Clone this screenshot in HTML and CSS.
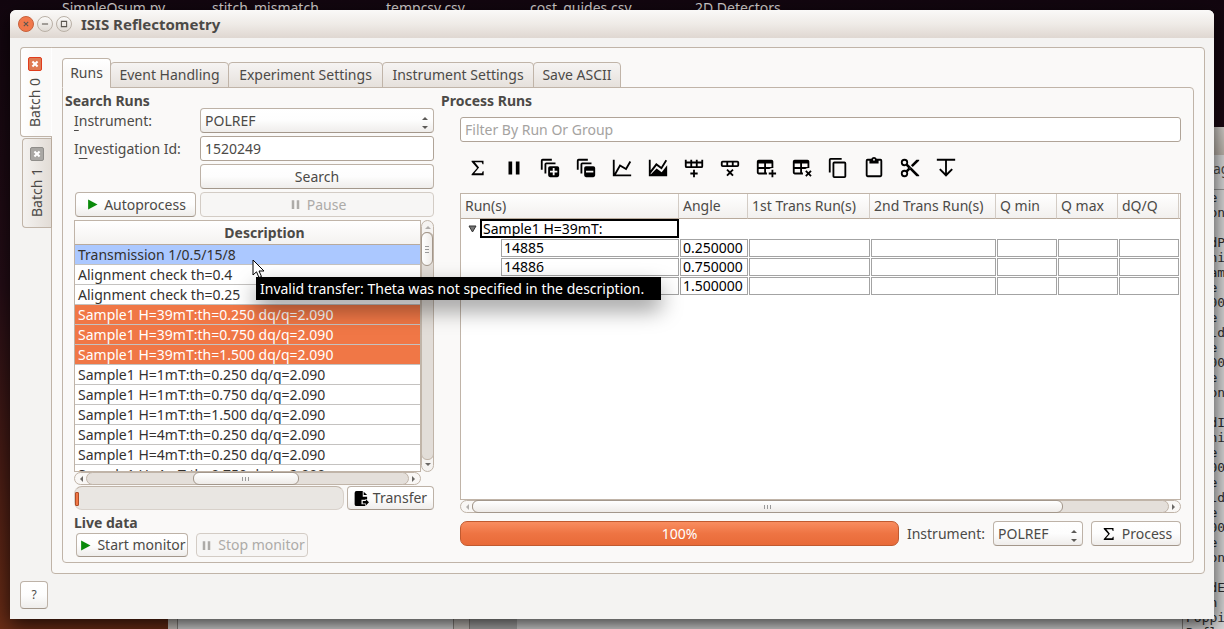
FILE: index.html
```
<!DOCTYPE html>
<html lang="en">
<head>
<meta charset="utf-8">
<title>ISIS Reflectometry</title>
<link rel="stylesheet" href="styles.css">
</head>
<body>
<svg class="defs" aria-hidden="true">
  <symbol id="sigma" viewBox="0 0 24 24"><path d="M5,4H18V8H17L16,5.700H8.500L13.200,11.500L8,17.700H16.200L17.200,15.500H18.200V20H5V18.700L11,12L5,5.200Z"/></symbol>
  <symbol id="pause" viewBox="0 0 24 24"><path d="M14,19H18V5H14M6,19H10V5H6V19Z"/></symbol>
  <symbol id="play" viewBox="0 0 24 24"><path d="M5,4V20L20,12Z"/></symbol>
</svg>
<div class="desktop">
  <div class="desktop-icons"><span>SimpleQsum.py</span><span>stitch_mismatch</span><span>tempcsv.csv</span><span>cost_guides.csv</span><span>2D Detectors</span></div>
  <div class="back-window back-bottom"><i></i><i></i><i></i></div>
  <div class="back-window back-right">
    <div class="back-title"></div>
    <div class="back-tab">ag</div>
<pre class="back-log">
   e
   on

   dP
   ni
   am
   e
   00
   e
   ld
   e
   00
   e
   on

   dI
   ni
   e
   00
   e
   ld
   e
   00
   e
   on

   dE
   n
Poppi
Refl</pre>
  </div>

  <main class="window">
    <header class="titlebar">
      <button class="wm wm-close" aria-label="Close"><svg viewBox="0 0 16 16"><path d="M5.500 5.500l5 5M10.500 5.500l-5 5"/></svg></button>
      <button class="wm" aria-label="Minimize"><svg viewBox="0 0 16 16"><path d="M4.500 8h7"/></svg></button>
      <button class="wm" aria-label="Maximize"><svg viewBox="0 0 16 16"><path d="M5 5h6v6H5z"/></svg></button>
      <h1>ISIS Reflectometry</h1>
    </header>
    <div class="content">
      <div class="batches">
        <div class="batch-tabs">
          <div class="batch-tab active"><button class="tab-close" aria-label="Close Batch 0"><svg viewBox="0 0 14 14"><path d="M4 4l6 6M10 4l-6 6"/></svg></button><button class="batch-label">Batch 0</button></div>
          <div class="batch-tab"><button class="tab-close" aria-label="Close Batch 1"><svg viewBox="0 0 14 14"><path d="M4 4l6 6M10 4l-6 6"/></svg></button><button class="batch-label">Batch 1</button></div>
        </div>
        <section class="batch-panel">
          <nav class="tabs">
            <button class="tab active">Runs</button><button class="tab">Event Handling</button><button class="tab">Experiment Settings</button><button class="tab">Instrument Settings</button><button class="tab">Save ASCII</button>
          </nav>
          <div class="tab-panel">
            <section class="search">
              <h2>Search Runs</h2>
              <div class="search-body">
                <div class="form">
                  <label for="inst"><u>I</u>nstrument:</label>
                  <span class="combo"><select id="inst"><option>POLREF</option></select></span>
                  <label for="inv">I<u>n</u>vestigation Id:</label>
                  <input id="inv" class="field" type="text" value="1520249">
                  <button class="btn search-btn">Search</button>
                  <button class="btn auto"><svg class="ico green"><use href="#play"/></svg>Autoprocess</button>
                  <button class="btn" disabled><svg class="ico"><use href="#pause"/></svg>Pause</button>
                </div>
                <div class="list-area">
                  <div class="list">
                    <table>
                      <thead><tr><th>Description</th></tr></thead>
                      <tbody>
                        <tr class="invalid"><td>Transmission 1/0.5/15/8</td></tr>
                        <tr><td>Alignment check th=0.4</td></tr>
                        <tr><td>Alignment check th=0.25</td></tr>
                        <tr class="selected"><td>Sample1 H=39mT:th=0.250 dq/q=2.090</td></tr>
                        <tr class="selected"><td>Sample1 H=39mT:th=0.750 dq/q=2.090</td></tr>
                        <tr class="selected"><td>Sample1 H=39mT:th=1.500 dq/q=2.090</td></tr>
                        <tr><td>Sample1 H=1mT:th=0.250 dq/q=2.090</td></tr>
                        <tr><td>Sample1 H=1mT:th=0.750 dq/q=2.090</td></tr>
                        <tr><td>Sample1 H=1mT:th=1.500 dq/q=2.090</td></tr>
                        <tr><td>Sample1 H=4mT:th=0.250 dq/q=2.090</td></tr>
                        <tr><td>Sample1 H=4mT:th=0.250 dq/q=2.090</td></tr>
                        <tr><td>Sample1 H=4mT:th=0.750 dq/q=2.090</td></tr>
                      </tbody>
                    </table>
                  </div>
                  <div class="vbar"><b class="arrow up dim"></b><div class="vtrack"><div class="vthumb"><i></i><i></i><i></i></div></div><b class="arrow down"></b></div>
                  <div class="hbar"><b class="arrow left"></b><div class="htrack"><div class="hthumb hthumb-list"><i></i><i></i><i></i></div></div><b class="arrow right"></b></div>
                </div>
                <div class="transfer-row">
                  <div class="progress" role="progressbar" aria-label="Search progress"><span></span></div>
                  <button class="btn transfer"><svg class="ico black" viewBox="0 0 24 24"><path d="M4 0h10v9h7v4h-3v1h-6v7h6v3H4a3 3 0 0 1-3-3V3a3 3 0 0 1 3-3M15.500 1l5.500 5.500h-5.500zM14 16h5v-3l5 5l-5 5v-3h-5z"/></svg>Transfer</button>
                </div>
                <h2>Live data</h2>
                <div class="live-row">
                  <button class="btn"><svg class="ico green"><use href="#play"/></svg>Start monitor</button>
                  <button class="btn" disabled><svg class="ico"><use href="#pause"/></svg>Stop monitor</button>
                </div>
              </div>
            </section>

            <section class="process">
              <h2>Process Runs</h2>
              <div class="process-body">
                <input class="field filter" type="text" placeholder="Filter By Run Or Group" aria-label="Filter By Run Or Group">
                <div class="toolbar">
                  <button aria-label="Process"><svg><use href="#sigma"/></svg></button>
                  <button aria-label="Pause"><svg><use href="#pause"/></svg></button>
                  <button aria-label="Expand all"><svg viewBox="0 0 24 24"><path d="M18,8H8V18H6V8A2,2 0 0,1 8,6H18V8M14,2H4A2,2 0 0,0 2,4V14H4V4H14V2M22,12V20A2,2 0 0,1 20,22H12A2,2 0 0,1 10,20V12A2,2 0 0,1 12,10H20A2,2 0 0,1 22,12M20,15H17V12H15V15H12V17H15V20H17V17H20V15Z"/></svg></button>
                  <button aria-label="Collapse all"><svg viewBox="0 0 24 24"><path d="M18,8H8V18H6V8A2,2 0 0,1 8,6H18V8M14,2H4A2,2 0 0,0 2,4V14H4V4H14V2M22,12V20A2,2 0 0,1 20,22H12A2,2 0 0,1 10,20V12A2,2 0 0,1 12,10H20A2,2 0 0,1 22,12M20,15H12V17H20V15Z"/></svg></button>
                  <button aria-label="Plot"><svg viewBox="0 0 24 24"><path d="M16,11.78L20.24,4.45L21.97,5.45L16.74,14.5L10.23,10.75L5.46,19H22V21H2V3H4V17.54L9.5,8L16,11.78Z"/></svg></button>
                  <button aria-label="Stitched plot"><svg viewBox="0 0 24 24"><path d="M2 3h2v11.500L10 6.500l5.500 4L20.200 3l1.700 1.200L16 13.500l-5.500-4L4 18v1L10.500 12.500l5.500 4L22 9v12H2z"/></svg></button>
                  <button aria-label="Insert row"><svg viewBox="0 0 24 24"><path d="M22,10A2,2 0 0,1 20,12H4A2,2 0 0,1 2,10V3H4V5H8V3H10V5H14V3H16V5H20V3H22V10M4,10H8V7H4V10M10,10H14V7H10V10M20,10V7H16V10H20M11,14H13V17H16V19H13V22H11V19H8V17H11V14Z"/></svg></button>
                  <button aria-label="Delete row"><svg viewBox="0 0 24 24"><path d="M9.41,13L12,15.59L14.59,13L16,14.41L13.41,17L16,19.59L14.59,21L12,18.41L9.41,21L8,19.59L10.59,17L8,14.41L9.41,13M22,9A2,2 0 0,1 20,11H4A2,2 0 0,1 2,9V6A2,2 0 0,1 4,4H20A2,2 0 0,1 22,6V9M4,9H8V6H4V9M10,9H14V6H10V9M16,9H20V6H16V9Z"/></svg></button>
                  <button aria-label="Insert group"><svg viewBox="0 0 24 24"><path d="M18,14H20V17H23V19H20V22H18V19H15V17H18V14M4,3H18A2,2 0 0,1 20,5V12.08C18.45,11.82 16.92,12.18 15.68,13H12V17H13.08C12.97,17.68 12.97,18.35 13.08,19H4A2,2 0 0,1 2,17V5A2,2 0 0,1 4,3M4,7V11H10V7H4M12,7V11H18V7H12M4,13V17H10V13H4Z"/></svg></button>
                  <button aria-label="Delete group"><svg viewBox="0 0 24 24"><path d="M15.46,15.88L16.88,14.46L19,16.59L21.12,14.46L22.54,15.88L20.41,18L22.54,20.12L21.12,21.54L19,19.41L16.88,21.54L15.46,20.12L17.59,18L15.46,15.88M4,3H18A2,2 0 0,1 20,5V12.08C18.45,11.82 16.92,12.18 15.68,13H12V17H13.08C12.97,17.68 12.97,18.35 13.08,19H4A2,2 0 0,1 2,17V5A2,2 0 0,1 4,3M4,7V11H10V7H4M12,7V11H18V7H12M4,13V17H10V13H4Z"/></svg></button>
                  <button aria-label="Copy"><svg viewBox="0 0 24 24"><path d="M19,21H8V7H19M19,5H8A2,2 0 0,0 6,7V21A2,2 0 0,0 8,23H19A2,2 0 0,0 21,21V7A2,2 0 0,0 19,5M16,1H4A2,2 0 0,0 2,3V17H4V3H16V1Z"/></svg></button>
                  <button aria-label="Paste"><svg viewBox="0 0 24 24"><path d="M19,20H5V4H7V7H17V4H19M12,2A1,1 0 0,1 13,3A1,1 0 0,1 12,4A1,1 0 0,1 11,3A1,1 0 0,1 12,2M19,2H14.82C14.4,0.84 13.3,0 12,0C10.7,0 9.6,0.84 9.18,2H5A2,2 0 0,0 3,4V20A2,2 0 0,0 5,22H19A2,2 0 0,0 21,20V4A2,2 0 0,0 19,2Z"/></svg></button>
                  <button aria-label="Cut"><svg viewBox="0 0 24 24"><path d="M19,3L13,9L15,11L22,4V3M12,12.5A0.5,0.5 0 0,1 11.5,12A0.5,0.5 0 0,1 12,11.5A0.5,0.5 0 0,1 12.5,12A0.5,0.5 0 0,1 12,12.5M6,20A2,2 0 0,1 4,18C4,16.89 4.9,16 6,16A2,2 0 0,1 8,18C8,19.11 7.1,20 6,20M6,8A2,2 0 0,1 4,6C4,4.89 4.9,4 6,4A2,2 0 0,1 8,6C8,7.11 7.1,8 6,8M9.64,7.64C9.87,7.14 10,6.59 10,6A4,4 0 0,0 6,2A4,4 0 0,0 2,6A4,4 0 0,0 6,10C6.59,10 7.14,9.87 7.64,9.64L10,12L7.64,14.36C7.14,14.13 6.59,14 6,14A4,4 0 0,0 2,18A4,4 0 0,0 6,22A4,4 0 0,0 10,18C10,17.41 9.87,16.86 9.64,16.36L12,14L19,21H22V20L9.64,7.64Z"/></svg></button>
                  <button aria-label="Fill down"><svg viewBox="0 0 24 24"><path d="M2 2H22V4H13V17.500L18 12.500L19.500 14L12 21.500L4.500 14L6 12.500L11 17.500V4H2Z"/></svg></button>
                </div>
                <div class="runs">
                  <table>
                    <colgroup><col class="c-run"><col class="c-angle"><col class="c-t1"><col class="c-t2"><col class="c-q"><col class="c-q"><col class="c-q"><col></colgroup>
                    <thead><tr><th>Run(s)</th><th>Angle</th><th>1st Trans Run(s)</th><th>2nd Trans Run(s)</th><th>Q min</th><th>Q max</th><th>dQ/Q</th><th></th></tr></thead>
                    <tbody>
                      <tr class="group"><td colspan="8"><div class="group-row"><svg viewBox="0 0 9 8"><path d="M1 1h7L4.500 7z"/></svg><div class="group-cell">Sample1 H=39mT:</div></div></td></tr>
                      <tr><td class="run"><div class="cell">14885</div></td><td><div class="cell">0.250000</div></td><td><div class="cell"></div></td><td><div class="cell"></div></td><td><div class="cell"></div></td><td><div class="cell"></div></td><td><div class="cell"></div></td><td></td></tr>
                      <tr><td class="run"><div class="cell">14886</div></td><td><div class="cell">0.750000</div></td><td><div class="cell"></div></td><td><div class="cell"></div></td><td><div class="cell"></div></td><td><div class="cell"></div></td><td><div class="cell"></div></td><td></td></tr>
                      <tr><td class="run"><div class="cell"></div></td><td><div class="cell">1.500000</div></td><td><div class="cell"></div></td><td><div class="cell"></div></td><td><div class="cell"></div></td><td><div class="cell"></div></td><td><div class="cell"></div></td><td></td></tr>
                    </tbody>
                  </table>
                </div>
                <div class="hbar"><b class="arrow left dim"></b><div class="htrack"><div class="hthumb hthumb-runs"><i></i><i></i><i></i></div></div><b class="arrow right"></b></div>
                <div class="process-row">
                  <div class="done" role="progressbar" aria-label="Processing" aria-valuenow="100">100%</div>
                  <label for="inst2">Instrument:</label>
                  <span class="combo combo-small"><select id="inst2"><option>POLREF</option></select></span>
                  <button class="btn process-btn"><svg class="ico big black"><use href="#sigma"/></svg>Process</button>
                </div>
              </div>
            </section>
          </div>
        </section>
      </div>
      <footer><button class="btn help">?</button></footer>
    </div>
  </main>
  <div class="tooltip" role="tooltip">Invalid transfer: Theta was not specified in the description.</div>
  <svg class="pointer" viewBox="0 0 13 20" aria-hidden="true"><path d="M1 1v15l3.500-3.200L7 18.500l2.500-1L7 12h5z"/></svg>
</div>
</body>
</html>
```
FILE: styles.css
```
* { box-sizing: border-box; }
body { margin: 0; font: 14px/20px "Noto Sans", "Open Sans", sans-serif; color: #4c4a47; }
button, input, select { font: inherit; color: inherit; margin: 0; }
button { padding: 0; border: 0; background: none; }
h1, h2 { margin: 0; font-size: 14px; }
h2 { line-height: 16px; }
.defs { position: absolute; width: 0; height: 0; }

.desktop {
  position: relative; display: flex; height: 100vh; min-height: 500px; padding: 10px; overflow: hidden;
  background: linear-gradient(#12060f, #240d16 45%, #4a1d15 75%, #6b2d16);
}
.desktop-icons { position: absolute; left: 62px; top: -2px; display: grid; grid-template-columns: 150px 174px 144px 165px auto; color: #d5d0d0; white-space: nowrap; }
.back-window { position: absolute; background: #dadada; }
.back-bottom { left: 168px; right: 0; bottom: 0; height: 60px; display: flex; }
.back-bottom i { border: solid #8d8782; border-width: 0 1px; background: #d0cbc6; }
.back-bottom i:nth-child(1) { width: 10px; border-left: 0; }
.back-bottom i:nth-child(2) { width: 17px; margin-left: 275px; }
.back-bottom i:nth-child(3) { width: 47px; border: 0; background: #b0b0b0; }
.back-right { left: 1182px; right: 0; top: 127px; bottom: 0; overflow: hidden; border-left: 1px solid #8d8782; }
.back-title { height: 28px; background: linear-gradient(#d5d1cc, #bdb4ab); }
.back-tab { height: 35px; padding: 4px 0 0 30px; border-bottom: 1px solid #999; }
.back-log { margin: 0; padding-left: 3px; font: 13px/15px "DejaVu Sans Mono", monospace; color: #2d2d2d; }

.window {
  position: relative; flex: 1; min-width: 0; display: flex; flex-direction: column;
  background: #f4f3f2; border-radius: 6px 6px 0 0; box-shadow: 0 6px 20px rgba(0,0,0,.75);
}
.titlebar { display: flex; align-items: center; gap: 3px; height: 28px; padding: 0 8px; border-radius: 6px 6px 0 0; background: linear-gradient(#faf9f8, #efebe7 50%, #dfd7d1); }
.titlebar h1 { margin-left: 6px; font-size: 15px; }
.wm { width: 16px; height: 16px; border: 1px solid #b9b0a6; border-radius: 50%; background: linear-gradient(#fbfaf9, #dfdad4); }
.wm svg { display: block; width: 14px; height: 14px; fill: none; stroke: #5a5650; stroke-width: 1.2; }
.wm-close { background: #f1784b; border-color: #c8613c; }
.content { flex: 1; min-height: 0; display: flex; flex-direction: column; gap: 7px; padding: 9px 9px 10px 10px; }

.batches { flex: 1; min-height: 0; display: flex; }
.batch-tabs { position: relative; z-index: 1; width: 32px; margin-right: -1px; display: flex; flex-direction: column; align-items: flex-end; gap: 1px; }
.batch-tab { display: flex; flex-direction: column; align-items: center; gap: 7px; width: 30px; height: 90px; padding-top: 8px; border: 1px solid #c0b4a8; border-right-color: #b8aa9c; border-radius: 4px 0 0 4px; background: linear-gradient(90deg, #f4f2f0, #e2dcd6); }
.batch-tab.active { width: 32px; padding-top: 9px; border-right-color: transparent; background: linear-gradient(90deg, #fff, #faf9f8 50%); padding-right: 2px; }
.batch-label { writing-mode: vertical-rl; transform: rotate(180deg); }
.tab-close { width: 14px; height: 14px; background: #a9a7a4; border: 1px solid #8f8d8a; border-radius: 2px; }
.active .tab-close { background: #df7a52; border-color: #e03c1c; }
.tab-close svg { display: block; width: 12px; height: 12px; stroke: #fff; stroke-width: 2.4; }
.batch-panel { flex: 1; min-width: 0; display: flex; flex-direction: column; padding: 10px; border: 1px solid #c0b4a8; border-radius: 0 4px 4px 4px; background: #faf9f8; }

.tabs { position: relative; display: flex; align-items: flex-end; height: 30px; margin-bottom: -1px; }
.tab { height: 26px; margin-left: -1px; border: 1px solid #c0b4a8; border-radius: 4px 4px 0 0; background: linear-gradient(#f6f4f3, #e6e1dc); white-space: nowrap; }
.tab.active { width: 49px; height: 30px; margin: 0; border-bottom-color: #faf9f8; background: linear-gradient(#fff, #faf9f8 50%); }
.tab:nth-child(2) { width: 119px; }
.tab:nth-child(3) { width: 155px; }
.tab:nth-child(4) { width: 152px; }
.tab:nth-child(5) { width: 88px; }
.tab-panel { flex: 1; min-height: 0; display: flex; gap: 7px; padding: 5px 12px 0 2px; border: 1px solid #c0b4a8; border-radius: 0 4px 4px 4px; }

.search { flex: 0 0 369px; display: flex; flex-direction: column; padding-bottom: 5px; }
.search-body { flex: 1; min-height: 0; display: flex; flex-direction: column; margin-top: -1px; padding-left: 9px; }
.form { display: grid; grid-template-columns: 122px 1fr; grid-auto-rows: 25px; gap: 3px 4px; align-items: stretch; margin-bottom: 3px; }
.form label { line-height: 25px; }
.form u { text-underline-offset: 4px; }
.search-btn { grid-column: 2; }
.auto { margin-left: 1px; }
.btn {
  display: flex; align-items: center; justify-content: center; gap: 4px; white-space: nowrap;
  border: 1px solid #bdb2a7; border-bottom-color: #a3978b; border-radius: 4px; background: linear-gradient(#fff, #fdfdfd 50%, #efedeb);
}
.btn:disabled { color: #adaba8; border-color: #d3ccc5; background: #f7f6f5; }
.ico { width: 15px; height: 15px; fill: currentColor; }
.big { width: 18px; height: 18px; }
.green { fill: #0a8a0a; }
.black { fill: #000; }
.field { width: 100%; height: 25px; padding: 0 4px; border: 1px solid #b0a498; border-radius: 3px; background: #fff; }
.field::placeholder { color: #a5a3a1; opacity: 1; }
.combo { position: relative; display: block; }
.combo select { width: 100%; height: 25px; padding: 0 4px; appearance: none; border: 1px solid #bdb2a7; border-bottom-color: #a3978b; border-radius: 4px; background: linear-gradient(#fff, #fdfdfd 50%, #efedeb); }
.combo::before, .combo::after { content: ""; position: absolute; right: 6px; border: 3px solid transparent; }
.combo::before { top: 9px; border-top: 0; border-bottom-color: #5c5a57; }
.combo::after { bottom: 4px; border-bottom: 0; border-top-color: #5c5a57; }

.list-area { flex: 1; min-height: 0; display: grid; grid-template: minmax(0, 1fr) 13px / 1fr 13px; }
.list { overflow: hidden; border: 1px solid #c0b4a8; background: #fff; }
table { width: 100%; border-collapse: separate; border-spacing: 0; table-layout: fixed; }
td, th { padding: 0; white-space: nowrap; }
.list th { height: 24px; padding-left: 34px; border-bottom: 1px solid #b8aa9c; background: linear-gradient(#fff, #f4f2f0); }
.list td { height: 20px; padding-left: 3px; line-height: 19px; border-bottom: 1px solid #c4c2c0; color: #33312f; }
.list .invalid td { background: #abc8ff; }
.list .selected td { background: #f07746; color: #fff; }

.vbar { display: flex; flex-direction: column; align-items: center; border: 1px solid #c0b4a8; border-radius: 7px; background: #f5f3f1; }
.vtrack { flex: 1; width: 13px; margin: 3px 0; border: 1px solid #c0b4a8; border-radius: 6px; background: #e2ddd8; }
.vthumb { width: 12px; height: 34px; margin-left: -1px; margin-top: -1px; display: flex; flex-direction: column; align-items: center; justify-content: center; gap: 2px; border: 1px solid #a3978b; border-radius: 6px; background: linear-gradient(90deg, #fff, #eeebe8); }
.vthumb i { width: 4px; height: 1px; background: #999; }
.hbar { display: flex; align-items: center; height: 13px; border: 1px solid #c0b4a8; border-radius: 7px; background: #f9f7f5; }
.htrack { flex: 1; display: flex; height: 13px; margin: 0 3px; border: 1px solid #c0b4a8; border-radius: 7px; background: #e4dfda; }
.hthumb { display: flex; align-items: center; justify-content: center; gap: 2px; height: 13px; margin-top: -1px; border: 1px solid #a3978b; border-radius: 6px; background: linear-gradient(#fff, #eeebe8); }
.hthumb i { width: 1px; height: 4px; background: #999; }
.hthumb-list { width: 33%; margin-left: 33%; }
.hthumb-runs { width: 85%; margin-left: -1px; }
.arrow { width: 0; height: 0; border: 3px solid transparent; }
.arrow.up { border-top: 0; border-bottom-color: #6b6865; margin-top: 5px; }
.arrow.down { border-bottom: 0; border-top-color: #6b6865; margin-bottom: 5px; }
.arrow.left { border-left: 0; border-right-color: #6b6865; margin-left: 5px; }
.arrow.right { border-right: 0; border-left-color: #6b6865; margin-right: 5px; }
.arrow.dim { opacity: .5; }

.transfer-row { display: flex; gap: 3px; margin-top: 1px; }
.progress { flex: 1; height: 24px; padding: 5px 0; border: 1px solid #d8d1ca; border-top-color: #c0b4a8; border-radius: 8px; background: #e9e6e2; }
.progress span { display: block; width: 4px; height: 14px; border: 1px solid #b04e28; border-radius: 1px; background: #f07746; }
.transfer { width: 87px; height: 24px; }
.search-body h2 { margin: 5px 0 2px; }
.live-row { display: flex; gap: 8px; margin-left: 2px; }
.live-row .btn { width: 112px; height: 24px; }

.process { flex: 1; min-width: 0; display: flex; flex-direction: column; }
.process-body { flex: 1; min-height: 0; display: flex; flex-direction: column; padding: 8px 0 16px 19px; }
.toolbar { display: flex; height: 51px; }
.toolbar button { display: flex; align-items: center; justify-content: center; width: 36px; height: 51px; }
.toolbar svg { width: 22px; height: 22px; fill: #000; }
.runs { flex: 1; min-height: 0; overflow: hidden; border: 1px solid #c0b4a8; background: #fff; }
.runs th { height: 25px; padding-left: 4px; font-weight: 400; text-align: left; border: solid #d3ccc5; border-width: 0 1px 0 0; border-bottom: 1px solid #b8aa9c; background: linear-gradient(#fff, #f2f0ee); }
.runs th:last-child { border-right: 0; }
.runs td { height: 19px; padding: 1px 0 0 1px; }
.c-run { width: 218px; }
.c-angle { width: 69px; }
.c-t1 { width: 122px; }
.c-t2 { width: 126px; }
.c-q { width: 61px; }
.cell { height: 18px; padding-left: 2px; border: 1px solid #a3a3a3; line-height: 16px; color: #000; }
.runs .run { padding-left: 40px; }
.runs .group td { padding: 0; }
.group-row { display: flex; align-items: center; gap: 3px; padding-left: 7px; }
.group-row svg { width: 9px; height: 8px; fill: #777; stroke: #333; }
.group-cell { width: 199px; height: 19px; padding-left: 1px; border: 2px solid #000; line-height: 15px; color: #000; }

.process-row { display: flex; align-items: center; gap: 8px; margin-top: 8px; }
.done { flex: 1; height: 25px; line-height: 23px; text-align: center; color: #fff; border: 1px solid #c05a30; border-radius: 7px; background: linear-gradient(#f98d60, #ee7443 50%, #e86a38); }
.combo-small { width: 90px; }
.process-btn { width: 90px; height: 25px; }
.help { width: 28px; height: 28px; font-size: 12px; }

.tooltip { position: absolute; left: 256px; top: 277px; min-width: 405px; padding: 0 5px 0 4px; line-height: 23px; background: #000; color: #fff; box-shadow: 0 10px 22px rgba(0,0,0,.4); white-space: nowrap; }
.pointer { position: absolute; left: 252px; top: 259px; width: 13px; height: 20px; fill: #fff; stroke: #000; }
```
